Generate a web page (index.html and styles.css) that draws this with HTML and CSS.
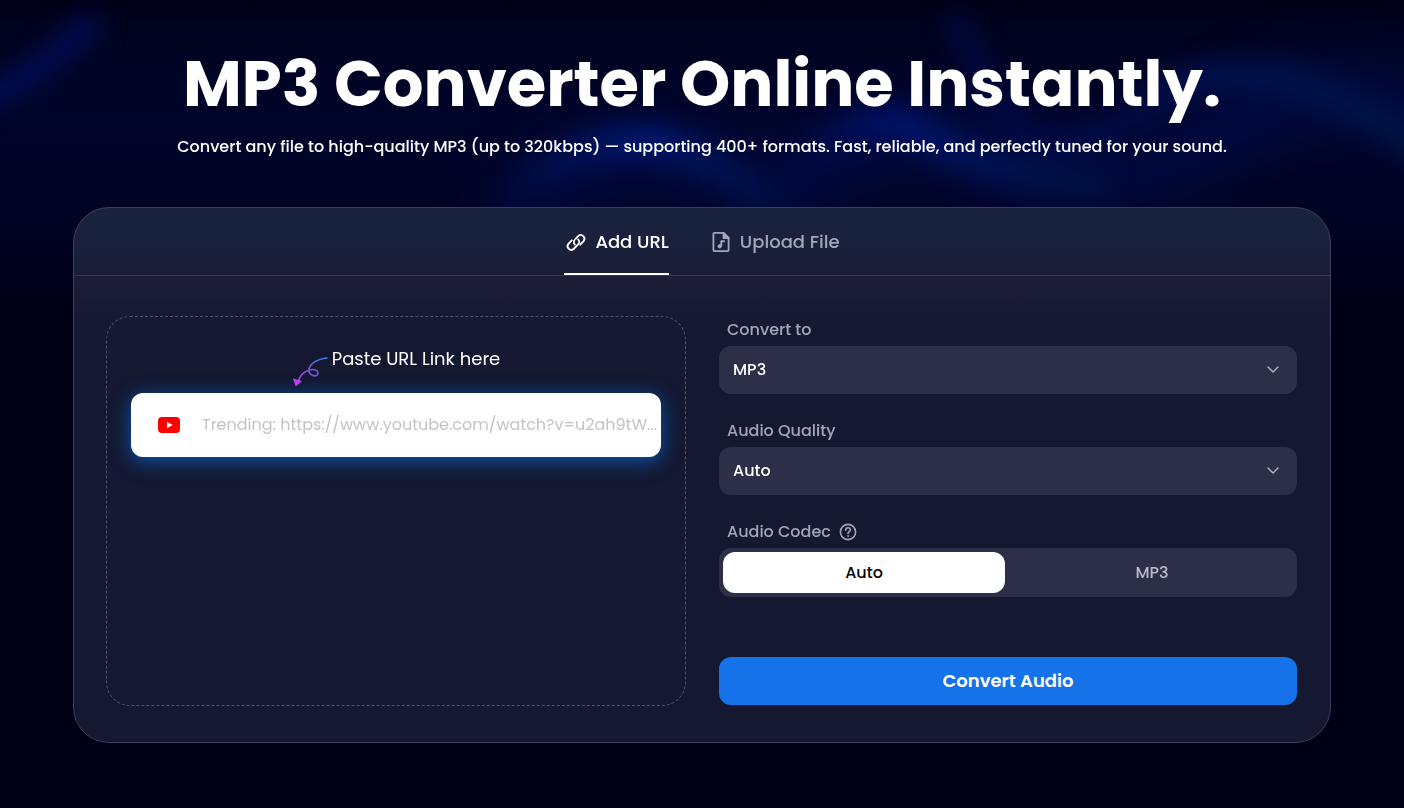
FILE: index.html
```html
<!DOCTYPE html>
<html lang="en">
<head>
  <meta charset="UTF-8">
  <meta name="viewport" content="width=device-width, initial-scale=1.0">
  <title>MP3 Converter</title>
  <link rel="stylesheet" href="styles.css">
</head>
<body>
  <!-- blurred light waves behind the page -->
  <svg class="waves" viewBox="0 0 1404 808" preserveAspectRatio="none" aria-hidden="true">
    <defs>
      <filter id="soft" filterUnits="userSpaceOnUse" x="-200" y="-200" width="1804" height="900" color-interpolation-filters="sRGB"><feGaussianBlur stdDeviation="12"/></filter>
      <filter id="haze" filterUnits="userSpaceOnUse" x="-200" y="-200" width="1804" height="900" color-interpolation-filters="sRGB"><feGaussianBlur stdDeviation="28"/></filter>
      <linearGradient id="base" x1="0" y1="0" x2="0" y2="1">
        <stop offset="0" stop-color="#000018"/>
        <stop offset="0.03" stop-color="#00041f"/>
        <stop offset="0.15" stop-color="#00052a"/>
        <stop offset="0.26" stop-color="#000424"/>
        <stop offset="0.4" stop-color="#000016"/>
        <stop offset="1" stop-color="#000016"/>
      </linearGradient>
      <linearGradient id="wave1" gradientUnits="userSpaceOnUse" x1="500" y1="0" x2="790" y2="0">
        <stop offset="0" stop-color="#001a70" stop-opacity="0"/>
        <stop offset="0.5" stop-color="#001a78"/>
        <stop offset="1" stop-color="#001a50" stop-opacity="0.2"/>
      </linearGradient>
      <linearGradient id="wave2" gradientUnits="userSpaceOnUse" x1="790" y1="0" x2="1100" y2="0">
        <stop offset="0" stop-color="#001470" stop-opacity="0"/>
        <stop offset="0.35" stop-color="#001470"/>
        <stop offset="1" stop-color="#002050" stop-opacity="0.3"/>
      </linearGradient>
      <linearGradient id="wave3" gradientUnits="userSpaceOnUse" x1="1050" y1="0" x2="1404" y2="0">
        <stop offset="0" stop-color="#00125a" stop-opacity="0"/>
        <stop offset="0.4" stop-color="#001660"/>
        <stop offset="1" stop-color="#001a4a"/>
      </linearGradient>
    </defs>
    <rect width="1404" height="808" fill="url(#base)"/>
    <g fill="none" filter="url(#haze)">
      <path d="M500 220C580 150 680 140 780 200C860 130 940 120 1000 170C1080 200 1160 180 1240 120C1300 80 1350 90 1440 120" stroke="#00126a" stroke-width="60" opacity="0.4"/>
    </g>
    <g fill="none" filter="url(#soft)">
      <path d="M-40 104C20 90 50 60 96 20" stroke="#000e60" stroke-width="24" opacity="0.8"/>
      <path d="M500 200C560 150 600 140 650 142C710 146 740 190 800 220" stroke="url(#wave1)" stroke-width="30"/>
      <path d="M780 170C850 120 890 112 925 135C975 162 1010 172 1110 190" stroke="url(#wave2)" stroke-width="30"/>
      <path d="M950 20C975 45 985 95 1020 130C1050 150 1080 150 1110 130" stroke="#000c58" stroke-width="22" opacity="0.6"/>
      <path d="M1060 150C1110 140 1130 105 1180 85C1230 65 1330 70 1450 170" stroke="url(#wave3)" stroke-width="30" opacity="0.7"/>
    </g>
  </svg>

  <main class="page">
    <header class="hero">
      <h1>MP3 Converter Online Instantly.</h1>
      <p>Convert any file to high-quality MP3 (up to 320kbps) — supporting 400+ formats. Fast, reliable, and perfectly tuned for your sound.</p>
    </header>

    <section class="card">
      <nav class="tabs">
        <button type="button" class="tab active">
          <svg width="24" height="24" viewBox="0 0 24 24" fill="none" stroke="currentColor" stroke-width="1.8" stroke-linecap="round" stroke-linejoin="round">
            <path d="M10.900 14.600a3.500 3.500 0 0 1-.1-5l3.600-3.700a3.700 3.700 0 0 1 5.200 5.200l-3.300 3.400"/>
            <path d="M14.100 9.400a3.500 3.500 0 0 1 .1 5l-4.600 4.600a3.700 3.700 0 0 1-5.200-5.200l3.300-3.400"/>
          </svg>
          Add URL
        </button>
        <button type="button" class="tab">
          <svg width="24" height="24" viewBox="0 0 24 24" fill="none" stroke="currentColor" stroke-width="1.8" stroke-linejoin="round">
            <path d="M14.500 2.900H5.400c-.6 0-1 .4-1 1v16.200c0 .6.4 1 1 1h13.200c.6 0 1-.4 1-1V8z"/>
            <path d="M14.500 2.900V8h5.100z" fill="currentColor"/>
            <circle cx="10.700" cy="16.300" r="1.700" fill="currentColor" stroke-width="1"/>
            <path d="M12.300 16.300v-5h3.500" stroke-width="1.900"/>
          </svg>
          Upload File
        </button>
      </nav>

      <form class="content">
        <div class="drop">
          <label class="hint" for="url">
            <svg width="36" height="32" viewBox="0 0 36 32" fill="none">
              <defs>
                <linearGradient id="arrow" x1="36" y1="2" x2="4" y2="30" gradientUnits="userSpaceOnUse">
                  <stop offset="0" stop-color="#2d7df0"/>
                  <stop offset="0.5" stop-color="#7d52dc"/>
                  <stop offset="1" stop-color="#c43cf5"/>
                </linearGradient>
              </defs>
              <path d="M35 1C25 2 17 7 17 13C17 19 25.500 21 26 16C26 10 10 11 6 25" stroke="url(#arrow)" stroke-width="1.600" stroke-linecap="round"/>
              <path d="M.8 21.500L10 24L3.800 29.500z" fill="#c43cf5"/>
            </svg>
            Paste URL Link here
          </label>
          <div class="url-box">
            <svg width="22" height="16" viewBox="0 0 22 16">
              <rect width="22" height="16" rx="4" fill="#f00"/>
              <path d="M9 4.700v6.600L14.700 8z" fill="#fff"/>
            </svg>
            <input type="text" id="url" placeholder="Trending: https://www.youtube.com/watch?v=u2ah9tW...">
          </div>
        </div>

        <div class="options">
          <div class="field">
            <label for="format">Convert to</label>
            <div class="select">
              <select id="format">
                <option>MP3</option>
                <option>WAV</option>
                <option>FLAC</option>
              </select>
              <svg width="12" height="8" viewBox="0 0 12 8" fill="none" stroke="#b4b4c6" stroke-width="1.4" stroke-linecap="round" stroke-linejoin="round"><path d="M1 1l5 5 5-5"/></svg>
            </div>
          </div>

          <div class="field">
            <label for="quality">Audio Quality</label>
            <div class="select">
              <select id="quality">
                <option>Auto</option>
                <option>320kbps</option>
                <option>128kbps</option>
              </select>
              <svg width="12" height="8" viewBox="0 0 12 8" fill="none" stroke="#b4b4c6" stroke-width="1.4" stroke-linecap="round" stroke-linejoin="round"><path d="M1 1l5 5 5-5"/></svg>
            </div>
          </div>

          <div class="field">
            <div class="label" id="codec-label">
              Audio Codec
              <svg width="18" height="18" viewBox="0 0 18 18" fill="none" stroke="currentColor" stroke-width="1.6" stroke-linecap="round">
                <circle cx="9" cy="9" r="7.600"/>
                <path d="M6.700 7.200c0-1.500 1-2.400 2.300-2.400s2.300.9 2.300 2.100c0 1.600-2.300 1.800-2.300 3.700"/>
                <circle cx="9" cy="13" r=".5" fill="currentColor" stroke-width=".8"/>
              </svg>
            </div>
            <div class="switch" role="radiogroup" aria-labelledby="codec-label">
              <label><input type="radio" name="codec" checked><span>Auto</span></label>
              <label><input type="radio" name="codec"><span>MP3</span></label>
            </div>
          </div>

          <button type="button" class="convert">Convert Audio</button>
        </div>
      </form>
    </section>
  </main>
</body>
</html>
```
FILE: styles.css
```css
* {
  box-sizing: border-box;
}

body {
  margin: 0;
  min-height: 100vh;
  background: #000016;
  color: #fff;
  font-family: 'Poppins', 'Inter', sans-serif;
  font-size: 16px;
  line-height: 24px;
}

.waves {
  position: absolute;
  top: 0;
  left: 0;
  width: 100%;
  height: 100%;
  z-index: -1;
}

.page {
  padding: 48px 73px 64px;
}

.hero {
  text-align: center;
  margin-bottom: 48px;
}

h1 {
  margin: 0 0 15px;
  font-size: 64px;
  line-height: 72px;
  font-weight: 700;
}

.hero p {
  margin: 0;
  font-weight: 500;
}

.card {
  border: 1px solid #3d3f5a;
  border-radius: 36px;
  background: linear-gradient(#19233f 0, #1a203a 50px, #1c1c36 76px, #141831 125px, #141831 100%);
}

.tabs {
  display: flex;
  justify-content: center;
  gap: 40px;
  height: 68px;
  border-bottom: 1px solid #38394f;
}

.tab {
  display: flex;
  align-items: center;
  gap: 7px;
  padding: 2px 0 0;
  border: none;
  border-bottom: 2px solid transparent;
  background: none;
  color: #a3a6b8;
  font: inherit;
  font-size: 18px;
  font-weight: 500;
  cursor: pointer;
}

.tab.active {
  color: #fff;
  border-color: #fff;
}

.content {
  display: grid;
  grid-template-columns: 1fr 1fr;
  gap: 32px;
  padding: 40px 32px 36px;
}

.drop {
  min-height: 390px;
  padding: 30px 24px;
  border: 1px dashed #51546c;
  border-radius: 24px;
}

.hint {
  display: flex;
  justify-content: center;
  gap: 4px;
  height: 46px;
  font-size: 18px;
}

.hint svg {
  margin-top: 10px;
}

.url-box {
  display: flex;
  align-items: center;
  gap: 22px;
  height: 64px;
  padding-left: 27px;
  border-radius: 12px;
  background: #fff;
  box-shadow: 0 4px 20px #0a56b0;
}

.url-box svg {
  flex: none;
}

.url-box input {
  flex: 1;
  min-width: 0;
  padding: 0;
  border: none;
  outline: none;
  background: none;
  color: #222;
  font: inherit;
  text-overflow: ellipsis;
}

.url-box input::placeholder {
  color: #c4c4c4;
}

.options {
  display: flex;
  flex-direction: column;
  gap: 23px;
  padding: 0 1px 1px;
}

.field > label,
.label {
  display: flex;
  align-items: center;
  gap: 8px;
  height: 28px;
  margin-bottom: 2px;
  padding-left: 8px;
  color: #a3a6b8;
  font-weight: 500;
}

.select {
  position: relative;
}

.select select {
  display: block;
  width: 100%;
  height: 48px;
  padding: 0 14px;
  border: none;
  border-radius: 12px;
  background: #2d2e47;
  color: #fff;
  font: inherit;
  font-weight: 500;
  appearance: none;
}

.select svg {
  position: absolute;
  top: 20px;
  right: 18px;
  pointer-events: none;
}

.switch {
  display: grid;
  grid-template-columns: 1fr 1fr;
  gap: 6px;
  padding: 4px;
  border-radius: 12px;
  background: #2d2e47;
}

.switch label {
  position: relative;
}

.switch input {
  position: absolute;
  width: 100%;
  height: 100%;
  margin: 0;
  opacity: 0;
  cursor: pointer;
}

.switch span {
  display: block;
  border-radius: 12px;
  color: #b9bbca;
  font-weight: 500;
  line-height: 41px;
  text-align: center;
}

.switch input:checked + span {
  background: #fff;
  color: #000;
}

.convert {
  height: 48px;
  margin-top: auto;
  border: none;
  border-radius: 12px;
  background: #1672e8;
  color: #fff;
  font: inherit;
  font-size: 18px;
  font-weight: 600;
  cursor: pointer;
}

@media (max-width: 900px) {
  .page {
    padding: 32px 16px;
  }

  h1 {
    font-size: 40px;
    line-height: 48px;
  }

  .content {
    grid-template-columns: 1fr;
    padding: 24px 16px;
  }
}
```
